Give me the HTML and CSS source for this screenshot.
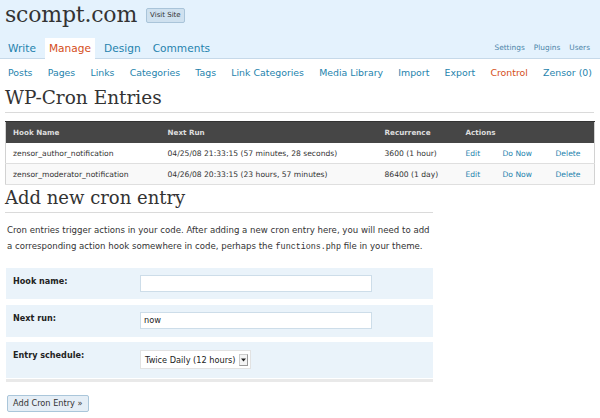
FILE: index.html
```html
<!DOCTYPE html>
<html>
<head>
<meta charset="utf-8">
<link rel="stylesheet" href="styles.css">
</head>
<body>
<div class="header">
  <div class="site">
    <h1 class="site-title">scompt.com</h1>
    <span class="visit">Visit Site</span>
  </div>
  <div class="tabbar">
    <ul class="tabs">
      <li><a>Write</a></li>
      <li class="current"><a>Manage</a></li>
      <li><a>Design</a></li>
      <li><a>Comments</a></li>
    </ul>
    <ul class="side">
      <li><a>Settings</a></li>
      <li><a>Plugins</a></li>
      <li><a>Users</a></li>
    </ul>
  </div>
</div>
<ul class="submenu">
  <li><a>Posts</a></li>
  <li><a>Pages</a></li>
  <li><a>Links</a></li>
  <li><a>Categories</a></li>
  <li><a>Tags</a></li>
  <li><a>Link Categories</a></li>
  <li><a>Media Library</a></li>
  <li><a>Import</a></li>
  <li><a>Export</a></li>
  <li class="current"><a>Crontrol</a></li>
  <li><a>Zensor (0)</a></li>
</ul>
<div class="wrap">
  <h2 class="heading">WP-Cron Entries</h2>
  <table class="crons">
    <colgroup>
      <col class="w1"><col class="w2"><col class="w3"><col class="w4"><col class="w5"><col class="w6">
    </colgroup>
    <thead>
      <tr><th>Hook Name</th><th>Next Run</th><th>Recurrence</th><th colspan="3">Actions</th></tr>
    </thead>
    <tbody>
      <tr><td>zensor_author_notification</td><td>04/25/08 21:33:15 (57 minutes, 28 seconds)</td><td>3600 (1 hour)</td><td class="act"><a>Edit</a></td><td class="act"><a>Do Now</a></td><td class="act"><a>Delete</a></td></tr>
      <tr class="alt"><td>zensor_moderator_notification</td><td>04/26/08 20:33:15 (23 hours, 57 minutes)</td><td>86400 (1 day)</td><td class="act"><a>Edit</a></td><td class="act"><a>Do Now</a></td><td class="act"><a>Delete</a></td></tr>
    </tbody>
  </table>
  <div class="add">
    <h2 class="heading short">Add new cron entry</h2>
    <p class="intro">Cron entries trigger actions in your code. After adding a new cron entry here, you will need to add a corresponding action hook somewhere in code, perhaps the <code>functions.php</code> file in your theme.</p>
    <div class="form">
      <div class="frow"><label>Hook name:</label><span class="field"></span></div>
      <div class="frow"><label>Next run:</label><span class="field">now</span></div>
      <div class="frow tall"><label>Entry schedule:</label><span class="select">Twice Daily (12 hours)<span class="arrow"><svg width="5" height="4" viewBox="0 0 5 4"><path d="M0 0.5h5L2.5 3.5z" fill="#222"/></svg></span></span></div>
    </div>
    <span class="button">Add Cron Entry &raquo;</span>
  </div>
</div>
</body>
</html>
```
FILE: styles.css
```css
html, body { margin: 0; padding: 0; background: #fff; }
body { font-family: "DejaVu Sans", "Liberation Sans", sans-serif; color: #333; }
ul { list-style: none; margin: 0; padding: 0; }
a { color: #2583ad; }

.header { background: #e4f2fd; height: 58px; border-bottom: 1px solid #c6d9e9; display: flex; flex-direction: column; justify-content: space-between; }
.site { display: flex; align-items: flex-start; padding: 0 0 0 5px; }
.site-title { margin: 0; font-family: "DejaVu Serif", Georgia, serif; font-weight: normal; font-size: 22px; line-height: 30px; color: #333; letter-spacing: -0.2px; }
.visit { margin: 8px 0 0 9px; font-size: 7px; line-height: 13px; padding: 0 3px; background: #cfe1ef; border: 1px solid #a9c4d9; border-radius: 2px; color: #333; }

.tabbar { display: flex; justify-content: space-between; align-items: flex-end; }
.tabs { display: flex; padding-left: 4px; }
.tabs li { padding: 0 4px; height: 20px; line-height: 20px; margin-right: 4px; font-size: 10.6px; white-space: nowrap; }
.tabs li a { color: #2583ad; }
.tabs li.current { background: #fff; margin-bottom: -1px; height: 21px; margin-left: 1px; margin-right: 5px; }
.tabs li.current a { color: #d54e21; }
.side { display: flex; padding-right: 10px; padding-bottom: 6px; gap: 9px; }
.side li { font-size: 7.4px; white-space: nowrap; }
.side li a { color: #4b84a8; }

.submenu { display: flex; justify-content: space-between; padding: 7px 8px 0 8px; font-size: 9.4px; line-height: 14px; white-space: nowrap; }
.submenu li a { color: #2583ad; }
.submenu li.current a { color: #d54e21; }

.wrap { padding: 0 6px 0 5px; }
.heading { margin: 0; font-family: "DejaVu Serif", Georgia, serif; font-weight: normal; font-size: 18.5px; line-height: 22px; color: #333; padding: 7px 0 3px 0; border-bottom: 1px solid #dadada; }
.add { width: 433px; }
.heading.short { width: 428px; padding-top: 2px; font-size: 18px; }

.crons { margin-top: 8px; width: 589px; border-collapse: collapse; border: 1px solid #d2d2d2; table-layout: fixed; }
.w1 { width: 155px; } .w2 { width: 217px; } .w3 { width: 81px; } .w4 { width: 37px; } .w5 { width: 53px; } .w6 { width: 46px; }
.crons th { background: #464646; color: #ddd; text-align: left; font-weight: bold; font-size: 7.2px; height: 21px; padding: 0 0 0 7px; border-top: 1px solid #333; }
.crons td { height: 20px; padding: 0 0 0 7px; border-bottom: 1px solid #dfdfdf; color: #333; white-space: nowrap; font-size: 7.6px; }
.crons tr.alt td { background: #f9f9f9; }
.crons td.act a { color: #2583ad; }

.intro { width: 425px; margin: 9px 0 0 2px; font-size: 8.6px; line-height: 16px; color: #333; }
.intro code { font-family: "Liberation Mono", monospace; font-size: 8.4px; line-height: 1; }

.form { margin-top: 14px; width: 427px; margin-left: 1px; border-bottom: 3px solid #e9e9e9; padding-bottom: 1px; }
.frow { display: flex; align-items: flex-start; background: #eaf3fa; height: 31px; margin-bottom: 6px; }
.frow + .frow { height: 32px; margin-bottom: 5px; }
.frow.tall { height: 36px; margin-bottom: 0; }
.frow label { width: 127px; flex: none; padding: 7px 0 0 7px; font-size: 8.1px; font-weight: bold; color: #222; line-height: 12px; }
.field { margin-top: 7px; width: 227px; height: 15px; background: #fff; border: 1px solid #cddde9; font-size: 8.2px; line-height: 15px; padding-left: 3px; color: #222; box-sizing: content-box; }
.select { margin-top: 8px; height: 17px; display: flex; align-items: center; background: #fff; border: 1px solid #e2e2e2; font-size: 8.2px; padding-left: 4px; color: #222; white-space: nowrap; }
.arrow { margin-left: 3px; margin-right: 2px; width: 7px; height: 10px; border: 1px solid #999; border-top-color: #ccc; border-left-color: #ccc; background: #f4f4f4; display: flex; align-items: center; justify-content: center; }

.button { display: inline-block; margin: 13px 0 0 2px; font-size: 8.2px; line-height: 15px; padding: 0 5px 0 5px; border: 1px solid #aac6da; background: #e5eef6; color: #333; border-radius: 2px; }
```
